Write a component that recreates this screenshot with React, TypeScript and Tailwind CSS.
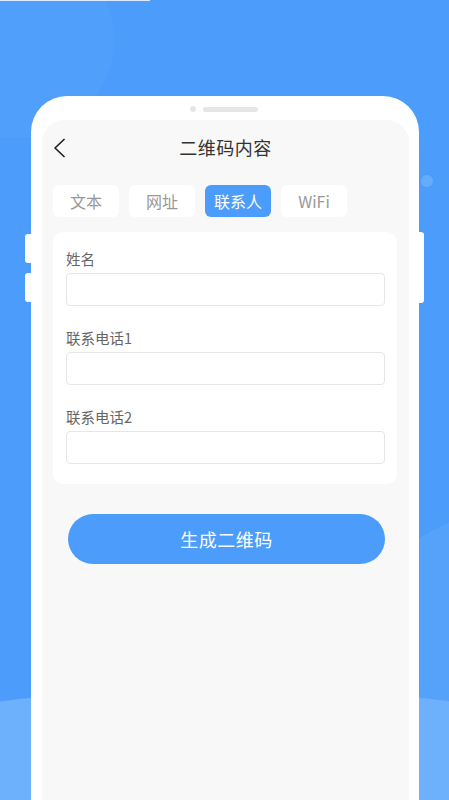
import { useState } from 'react'

const TABS = ['文本', '网址', '联系人', 'WiFi']
const FIELDS = ['姓名', '联系电话1', '联系电话2']

export default function App() {
  const [tab, setTab] = useState(2)

  return (
    <div
      className="relative w-[449px] h-[800px] overflow-hidden bg-[#4c9dfb]"
      style={{ fontFamily: '"Noto Sans CJK SC", "Noto Sans", sans-serif' }}
    >
      {/* background decoration */}
      <div className="absolute -left-[82px] -top-[58px] w-[196px] h-[196px] rounded-full bg-[#509ffb]" />
      <div className="absolute left-0 top-0 w-[150px] h-[1px] bg-white/80" />
      <div className="absolute left-[421px] top-[175px] w-[12px] h-[12px] rounded-full bg-[#66acfc]" />
      <div className="absolute left-[330px] top-[505px] w-[400px] h-[400px] rounded-full bg-[#55a2fb]" />
      <div className="absolute -left-[400px] top-[688px] w-[1250px] h-[400px] rounded-[50%] bg-[#6db0fc]" />

      {/* phone */}
      <div className="relative mt-[96px] ml-[31px] w-[388px] h-[704px]">
        <div className="absolute -left-[6px] top-[138px] w-[8px] h-[29px] rounded-l-[3px] bg-white" />
        <div className="absolute -left-[6px] top-[177px] w-[8px] h-[29px] rounded-l-[3px] bg-white" />
        <div className="absolute -right-[5px] top-[136px] w-[7px] h-[71px] rounded-r-[3px] bg-white" />

        <div className="relative flex flex-col h-full rounded-t-[36px] bg-white pt-[10px] pl-[11px] pr-[10px]">
          {/* speaker */}
          <div className="flex items-center justify-center gap-[7px] h-[6px] mb-[8px] pr-[4px]">
            <div className="w-[6px] h-[6px] rounded-full bg-[#e6e6e6]" />
            <div className="w-[55px] h-[5px] rounded-full bg-[#e6e6e6]" />
          </div>

          <div className="flex-1 rounded-t-[22px] bg-[#f8f8f8] px-[11px]">
            {/* header */}
            <div className="grid grid-cols-[40px_1fr_40px] items-center h-[54px]">
              <button className="flex items-center pt-[2px]">
                <svg width="13" height="20" viewBox="0 0 13 20" fill="none">
                  <path d="M11 1.5 L2 10 L11 18.5" stroke="#222" strokeWidth="1.7" strokeLinecap="round" strokeLinejoin="round" />
                </svg>
              </button>
              <span className="text-center text-[18px] text-[#333] tracking-[0.5px] mt-[1px]">二维码内容</span>
              <span />
            </div>

            {/* tabs */}
            <div className="flex gap-[10px] mt-[11px]">
              {TABS.map((t, i) => (
                <button
                  key={t}
                  onClick={() => setTab(i)}
                  className={`w-[66px] h-[32px] rounded-[6px] text-[16px] leading-none flex items-center justify-center ${
                    tab === i ? 'bg-[#4c9dfb] text-white' : 'bg-white text-[#999]'
                  }`}
                >
                  {t}
                </button>
              ))}
            </div>

            {/* form */}
            <div className="mt-[15px] mr-[1px] rounded-[10px] bg-white pt-[16px] pb-[20px] pl-[13px] pr-[12px] flex flex-col gap-[21px]">
              {FIELDS.map(f => (
                <label key={f} className="flex flex-col gap-[3px]">
                  <span className="h-[22px] leading-[22px] text-[14.5px] text-[#666]">{f}</span>
                  <input className="w-full h-[33px] rounded-[4px] border border-[#e6e6e6] bg-white px-2 text-[14px] outline-none" />
                </label>
              ))}
            </div>

            {/* submit */}
            <div className="flex pt-[30px] pl-[15px] pr-[13px]">
              <button className="flex-1 h-[50px] rounded-full bg-[#4c9dfb] text-white text-[18px] tracking-[0.5px] flex items-center justify-center">
                生成二维码
              </button>
            </div>
          </div>
        </div>
      </div>
    </div>
  )
}
